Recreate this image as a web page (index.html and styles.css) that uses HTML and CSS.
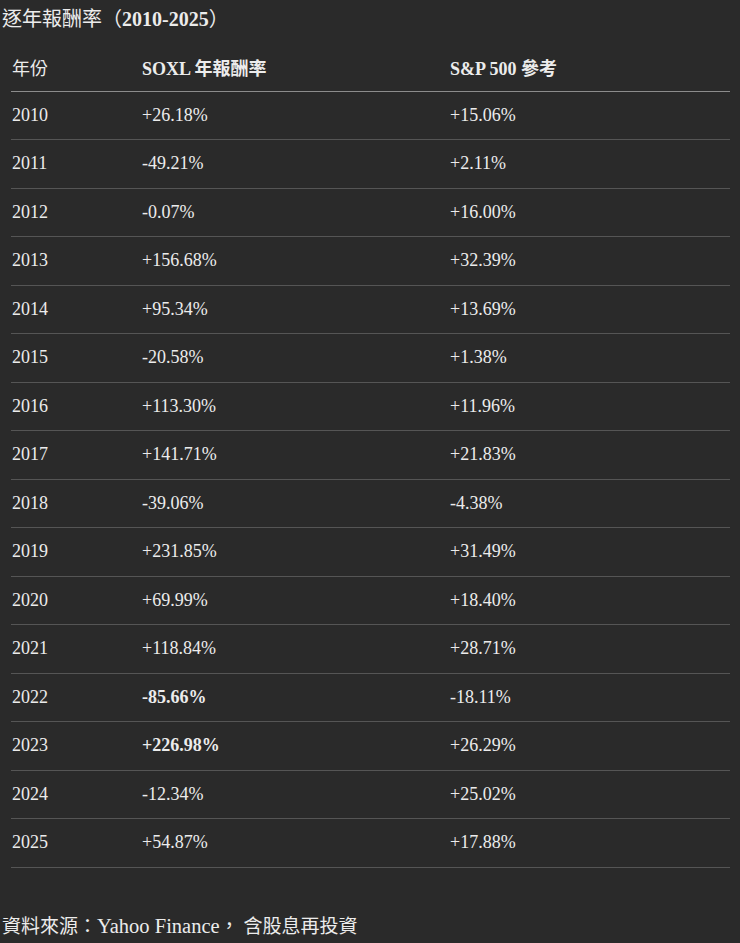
FILE: index.html
```html
<!DOCTYPE html>
<html lang="zh-Hant">
<head>
<meta charset="utf-8">
<link rel="stylesheet" href="styles.css">
</head>
<body>
<div class="page">
  <h3 class="title">逐年報酬率（<span class="num">2010-2025</span>）</h3>
  <table class="returns">
    <thead>
      <tr><th class="c1">年份</th><th class="c2">SOXL 年報酬率</th><th class="c3">S&amp;P 500 參考</th></tr>
    </thead>
    <tbody>
      <tr><td>2010</td><td>+26.18%</td><td>+15.06%</td></tr>
      <tr><td>2011</td><td>-49.21%</td><td>+2.11%</td></tr>
      <tr><td>2012</td><td>-0.07%</td><td>+16.00%</td></tr>
      <tr><td>2013</td><td>+156.68%</td><td>+32.39%</td></tr>
      <tr><td>2014</td><td>+95.34%</td><td>+13.69%</td></tr>
      <tr><td>2015</td><td>-20.58%</td><td>+1.38%</td></tr>
      <tr><td>2016</td><td>+113.30%</td><td>+11.96%</td></tr>
      <tr><td>2017</td><td>+141.71%</td><td>+21.83%</td></tr>
      <tr><td>2018</td><td>-39.06%</td><td>-4.38%</td></tr>
      <tr><td>2019</td><td>+231.85%</td><td>+31.49%</td></tr>
      <tr><td>2020</td><td>+69.99%</td><td>+18.40%</td></tr>
      <tr><td>2021</td><td>+118.84%</td><td>+28.71%</td></tr>
      <tr><td>2022</td><td><strong>-85.66%</strong></td><td>-18.11%</td></tr>
      <tr><td>2023</td><td><strong>+226.98%</strong></td><td>+26.29%</td></tr>
      <tr><td>2024</td><td>-12.34%</td><td>+25.02%</td></tr>
      <tr><td>2025</td><td>+54.87%</td><td>+17.88%</td></tr>
    </tbody>
  </table>
  <p class="source">資料來源：<span class="en">Yahoo Finance</span>，&nbsp;含股息再投資</p>
</div>
</body>
</html>
```
FILE: styles.css
```css
html, body {
  margin: 0;
  padding: 0;
  background: #2a2a2a;
}
body {
  color: #ececec;
  font-family: "Liberation Serif", "Noto Sans CJK TC", serif;
  font-size: 18px;
}
.page {
  padding: 4px 0 0 2px;
}
.title {
  margin: 0 0 9px 0;
  font-size: 20px;
  line-height: 30px;
  font-weight: normal;
}
.title .num {
  font-weight: bold;
}
.returns {
  margin-left: 9px;
  width: 719px;
  border-collapse: collapse;
}
.returns th,
.returns td {
  text-align: left;
  padding: 10.25px 0 10.25px 1px;
  line-height: 27px;
  vertical-align: middle;
}
.returns th {
  font-weight: bold;
  padding-top: 12.75px;
  padding-bottom: 7.75px;
  border-bottom: 1px solid #8c8c8c;
}
.returns th.c1 { width: 129px; font-weight: normal; }
.returns th.c2 { width: 307px; }
.returns td {
  border-bottom: 1px solid #555555;
}
.returns strong {
  font-weight: bold;
}
.source {
  margin: 44px 0 0 0;
  font-size: 19px;
  line-height: 28px;
}
.source .en {
  font-size: 20.5px;
}
```
